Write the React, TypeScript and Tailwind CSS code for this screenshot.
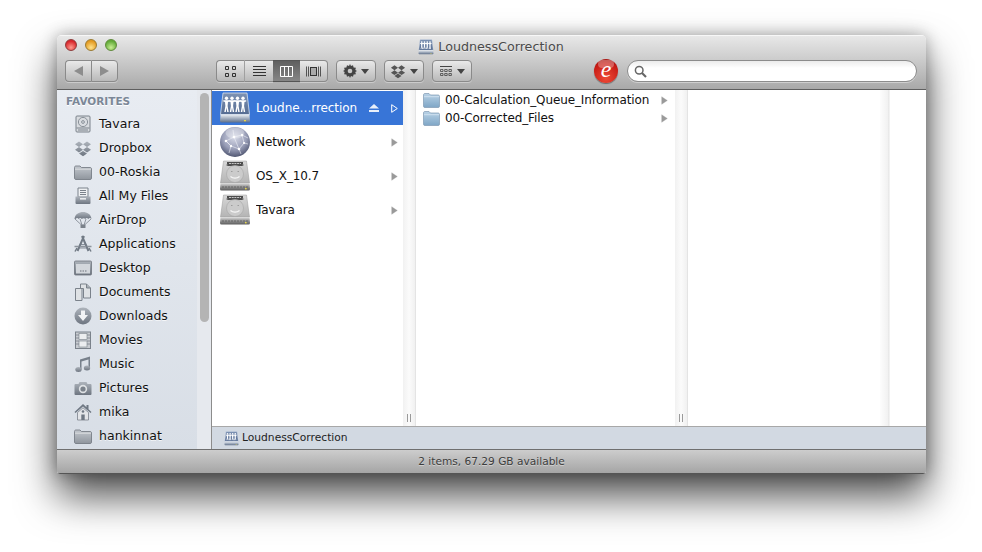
import React from "react";

function Defs() {
  return (
    <svg width="0" height="0" className="absolute">
      <defs>
        <linearGradient id="side" x1="0" y1="0" x2="0" y2="1">
          <stop offset="0" stopColor="#aeb4bc" />
          <stop offset="1" stopColor="#6d7580" />
        </linearGradient>
        <linearGradient id="folderSide" x1="0" y1="0" x2="0" y2="1">
          <stop offset="0" stopColor="#c3c8ce" />
          <stop offset="1" stopColor="#8f959d" />
        </linearGradient>
        <linearGradient id="folderBlue" x1="0" y1="0" x2="0" y2="1">
          <stop offset="0" stopColor="#b9d2e6" />
          <stop offset="1" stopColor="#7fa6c6" />
        </linearGradient>
        <linearGradient id="hd" x1="0" y1="0" x2="0" y2="1">
          <stop offset="0" stopColor="#d8d8d8" />
          <stop offset="1" stopColor="#b4b4b4" />
        </linearGradient>
        <linearGradient id="hdb" x1="0" y1="0" x2="0" y2="1">
          <stop offset="0" stopColor="#e2e2e2" />
          <stop offset="0.45" stopColor="#9a9a9a" />
          <stop offset="1" stopColor="#5c5c5c" />
        </linearGradient>
        <radialGradient id="globe" cx="0.48" cy="0.34" r="0.72">
          <stop offset="0" stopColor="#d6d9e6" />
          <stop offset="0.55" stopColor="#9a9fb8" />
          <stop offset="0.85" stopColor="#5f6580" />
          <stop offset="1" stopColor="#3a3f58" />
        </radialGradient>
        <linearGradient id="srv" x1="0" y1="0" x2="0" y2="1">
          <stop offset="0" stopColor="#7e93b4" />
          <stop offset="1" stopColor="#566c92" />
        </linearGradient>
        <linearGradient id="srvb" x1="0" y1="0" x2="0" y2="1">
          <stop offset="0" stopColor="#eef1f5" />
          <stop offset="0.45" stopColor="#a9b4c4" />
          <stop offset="1" stopColor="#5f6f88" />
        </linearGradient>
      </defs>
    </svg>
  );
}

const S = ({ children }: { children: React.ReactNode }) => (
  <svg width="18" height="18" viewBox="0 0 18 18" className="shrink-0">
    {children}
  </svg>
);

const SideFolder = () => (
  <S>
    <path d="M.5 4.500c0-1 .6-1.500 1.500-1.500h4l1.500 1.500H16c1 0 1.500.6 1.500 1.500v9c0 1-.6 1.500-1.500 1.500H2c-1 0-1.500-.6-1.500-1.500z" fill="url(#folderSide)" stroke="#6f757d" strokeWidth=".8" />
    <path d="M1 6.200h16" stroke="#e4e6e9" strokeWidth=".8" />
  </S>
);
const SideDisk = () => (
  <S>
    <rect x="2" y="1" width="14" height="16" rx="1" fill="#d9dce0" stroke="#7b828b" />
    <circle cx="9" cy="7" r="4.600" fill="none" stroke="#8b929a" />
    <circle cx="9" cy="7" r="1.400" fill="none" stroke="#8b929a" />
    <path d="M2.500 13h13M4 15h10" stroke="#7b828b" />
  </S>
);
const SideDropbox = () => (
  <S>
    <path d="M5 2.500 1 5.300 5 8 9 5.300zM13 2.500 9 5.300 13 8l4-2.700zM5 8 1 10.800l4 2.700 4-2.700zM13 8l-4 2.800 4 2.700 4-2.700zM5 14.500l4 2.700 4-2.700-4-2.600z" fill="url(#side)" />
  </S>
);
const SideFiles = () => (
  <S>
    <path d="M4 1h10v9H4z" fill="#eef0f2" stroke="#7b828b" />
    <path d="M6 3.500h6M6 5.500h6M6 7.500h6" stroke="#7b828b" />
    <path d="M1.500 9.500h15V16a1 1 0 0 1-1 1h-13a1 1 0 0 1-1-1z" fill="url(#side)" />
    <rect x="6" y="11" width="6" height="1.600" fill="#e8eaec" />
  </S>
);
const SideAirDrop = () => (
  <S>
    <path d="M.5 8C1 3 5 1 9 1s8 2 8.500 7c-1-1.200-2.300-1.200-3.200 0-1-1.200-2.300-1.200-3 0-.8-1-2.300-1-3.600 0-.7-1.200-2-1.200-3 0-.9-1.200-2.200-1.200-3.200 0z" fill="url(#side)" />
    <path d="M1 8l6.500 6M17 8l-6.500 6M6 8l2 6M12 8l-2 6" stroke="#7b828b" strokeWidth=".8" fill="none" />
    <rect x="6.500" y="13.500" width="5" height="3.500" rx=".5" fill="#7b828b" />
  </S>
);
const SideApps = () => (
  <S>
    <path d="M10 1 3.500 16M8 1l6.500 15" stroke="#717a85" strokeWidth="2" fill="none" />
    <path d="M0.500 11.500h17" stroke="#8d949d" strokeWidth="1.600" />
    <path d="M6 9.500h6l1 3.500H5z" fill="none" stroke="#717a85" strokeWidth=".8" />
    <path d="M1 16.500 3 13M17 16.500 15 13" stroke="#717a85" strokeWidth="1.500" />
  </S>
);
const SideDesktop = () => (
  <S>
    <rect x=".5" y="2" width="17" height="14" rx="1" fill="url(#side)" stroke="#6f757d" strokeWidth=".8" />
    <rect x="2" y="5" width="14" height="9.500" fill="#d3d7dc" />
    <path d="M6 12h1.500M8.500 12H10M11 12h1.500" stroke="#6f757d" strokeWidth="1.200" />
  </S>
);
const SideDocs = () => (
  <S>
    <path d="M1.500 5.500H8v12H1.500z" fill="#dfe2e5" stroke="#7b828b" />
    <path d="M6.500 1h6l4 4v10h-7V5.500h-3z" fill="#dfe2e5" stroke="#7b828b" />
    <path d="M12.500 1v4h4" fill="#aab0b7" stroke="#7b828b" />
  </S>
);
const SideDownloads = () => (
  <S>
    <circle cx="9" cy="9" r="8.500" fill="url(#side)" />
    <path d="M7 3.500h4V8h3l-5 6-5-6h3z" fill="#f2f3f5" />
  </S>
);
const SideMovies = () => (
  <S>
    <rect x="1.500" y="1" width="15" height="16.500" fill="#c8ccd1" stroke="#7b828b" />
    <rect x="5" y="2.500" width="8" height="6" fill="#eceef0" stroke="#7b828b" strokeWidth=".6" />
    <rect x="5" y="10" width="8" height="6" fill="#eceef0" stroke="#7b828b" strokeWidth=".6" />
    <path d="M1.500 4h3.500M1.500 7h3.500M1.500 10h3.500M1.500 13h3.500M13 4h3.500M13 7h3.500M13 10h3.500M13 13h3.500" stroke="#7b828b" strokeWidth=".8" />
  </S>
);
const SideMusic = () => (
  <S>
    <path d="M6 4.500 16 1.500v2.500L7.500 6.500V14.500h-1.500V4.500zM14.500 3h1.500v10h-1.500z" fill="#77808b" />
    <ellipse cx="4.500" cy="14.500" rx="3.200" ry="2.500" fill="url(#side)" />
    <ellipse cx="13" cy="13" rx="3.200" ry="2.500" fill="url(#side)" />
  </S>
);
const SidePictures = () => (
  <S>
    <path d="M1.500 5h3l1-2h7l1 2h3a1 1 0 0 1 1 1v9a1 1 0 0 1-1 1h-15a1 1 0 0 1-1-1V6a1 1 0 0 1 1-1z" fill="url(#side)" />
    <circle cx="9" cy="10" r="4.200" fill="#dfe2e5" />
    <circle cx="9" cy="10" r="2.600" fill="#7b828b" />
  </S>
);
const SideHome = () => (
  <S>
    <path d="M9 1 .5 9l1 1L9 3.500 16.500 10l1-1-3-2.800V2h-2v2.300z" fill="#6f7883" />
    <path d="M3.500 9.500 9 4.800l5.500 4.700V17h-11z" fill="#e3e5e8" stroke="#7b828b" strokeWidth=".8" />
    <path d="M7.300 17v-5.500h3.400V17z" fill="#6f7883" />
    <circle cx="9" cy="8.500" r="1.300" fill="#6f7883" />
  </S>
);

const favourites: [string, React.FC][] = [
  ["Tavara", SideDisk],
  ["Dropbox", SideDropbox],
  ["00-Roskia", SideFolder],
  ["All My Files", SideFiles],
  ["AirDrop", SideAirDrop],
  ["Applications", SideApps],
  ["Desktop", SideDesktop],
  ["Documents", SideDocs],
  ["Downloads", SideDownloads],
  ["Movies", SideMovies],
  ["Music", SideMusic],
  ["Pictures", SidePictures],
  ["mika", SideHome],
  ["hankinnat", SideFolder],
];

const HardDrive = () => (
  <svg width="32" height="32" viewBox="0 0 32 32" className="shrink-0">
    <path d="M4.500 1h23L30.500 23h-29z" fill="url(#hd)" stroke="#9a9a9a" strokeWidth=".5" />
    <path d="M8 2h16v4H8z" fill="#4d4d4d" />
    <path d="M10 3.500h12" stroke="#e4e4e4" strokeWidth=".8" strokeDasharray="2 .7" />
    <path d="M7 5h2M23 5h2" stroke="#8a8a8a" strokeWidth="1.200" />
    <circle cx="16" cy="14" r="8.500" fill="#cbcbcb" stroke="#a6a6a6" strokeWidth=".6" />
    <path d="M11.500 16.500c2.500 2.200 6.500 2.200 9 0" stroke="#f7f7f7" strokeWidth="1.200" fill="none" />
    <path d="M12 11.500h1.500M18.500 11.500H20" stroke="#9d9d9d" strokeWidth="1" />
    <path d="M1.500 23h29l.5 6a1.500 1.500 0 0 1-1.500 1.500h-27A1.500 1.500 0 0 1 1 29z" fill="url(#hdb)" />
    <path d="M3 27h26" stroke="#555" strokeWidth=".7" strokeDasharray="2 1" />
    <rect x="26" y="28" width="1.600" height="1.400" fill="#e8d84a" />
  </svg>
);

const Globe = () => (
  <svg width="32" height="32" viewBox="0 0 32 32" className="shrink-0">
    <circle cx="16" cy="16" r="15" fill="url(#globe)" />
    <path d="M7 15 15 11l8-2 2 8-5 6-8-3zM7 15l5 5M15 11l5 12M23 9l6 3M15 11 14 4M25 17l4 1M12 20l-2 7M20 23l2 5" stroke="#eef0f6" strokeWidth=".6" fill="none" />
    <g fill="#fff">
      <circle cx="7" cy="15" r="1.300" />
      <circle cx="15" cy="11" r="1.300" />
      <circle cx="23" cy="9" r="1.200" />
      <circle cx="25" cy="17" r="1.100" />
      <circle cx="20" cy="23" r="1.300" />
      <circle cx="12" cy="20" r="1.200" />
    </g>
    <ellipse cx="16" cy="7" rx="9.500" ry="5.500" fill="#fff" opacity=".3" />
  </svg>
);

const Person = ({ x }: { x: number }) => (
  <g transform={`translate(${x} 0)`} fill="#fff">
    <circle cx="0" cy="6.200" r="1.700" />
    <path d="M-3.200 8.200h6.400v1.400l-1.700.3-.4 4 1.100 6H.7L0 15.500-.7 19.900h-1.500l1.100-6-.4-4-1.700-.3z" />
  </g>
);

const Server = ({ size = 32 }: { size?: number }) => (
  <svg width={size} height={size} viewBox="0 0 32 32" className="shrink-0">
    <path d="M4 1h24l2.500 21.500h-29z" fill="url(#srv)" stroke="#dbe3ee" strokeWidth=".8" />
    <Person x={7.500} />
    <Person x={13} />
    <Person x={18.500} />
    <Person x={24} />
    <path d="M1.500 22.500h29l.5 6.500a1.500 1.500 0 0 1-1.500 1.500h-27A1.500 1.500 0 0 1 1 29z" fill="url(#srvb)" />
    <rect x="25" y="28" width="2" height="1.300" fill="#e8d84a" />
  </svg>
);

const BlueFolder = () => (
  <svg width="17" height="15" viewBox="0 0 17 15" className="shrink-0">
    <path d="M.5 2C.5 1 1 .5 2 .5h4L7.500 2H15c1 0 1.500.5 1.500 1.500V13c0 1-.5 1.500-1.500 1.500H2C1 14.500.5 14 .5 13z" fill="url(#folderBlue)" stroke="#7f9ab3" strokeWidth=".7" />
    <path d="M1 3.700h15" stroke="#d8e6f2" strokeWidth=".8" />
  </svg>
);

const Tri = ({ color = "#9a9a9a", hollow = false }: { color?: string; hollow?: boolean }) => (
  <svg width="7" height="9" viewBox="0 0 7 9" className="shrink-0">
    <path d="M.7.7 6.300 4.500.7 8.300z" fill={hollow ? "none" : color} stroke={color} strokeWidth={hollow ? 1 : 0.3} />
  </svg>
);

const Caret = () => (
  <svg width="8" height="5" viewBox="0 0 8 5" className="shrink-0">
    <path d="M0 0h8L4 5z" fill="#444" />
  </svg>
);

const Resizer = () => (
  <div className="relative w-[13px] shrink-0 bg-[linear-gradient(90deg,#f1f1f1,#fbfbfb_50%,#f1f1f1)] border-r border-[#e4e4e4]">
    <div className="absolute bottom-[4px] left-[4px] w-[4px] h-[8px] border-x border-[#9a9a9a]" />
  </div>
);

const btn = "h-[22px] flex items-center justify-center border border-[#8a8a8a] bg-[linear-gradient(#e9e9e9,#b9b9b9)] shadow-[0_1px_0_rgba(255,255,255,.35)]";

const Column1Row = ({
  icon,
  label,
  selected = false,
}: {
  icon: React.ReactNode;
  label: string;
  selected?: boolean;
}) => (
  <div className={`h-[34px] flex items-center pl-[7px] pr-[5px] ${selected ? "bg-[#3875d7] text-white" : "text-[#111]"}`}>
    {icon}
    <span className="ml-[5px] flex-1 truncate">{label}</span>
    {selected && (
      <svg width="10" height="8" viewBox="0 0 10 8" className="mr-[12px] shrink-0">
        <path d="M5 0l5 4.500H0zM0 6h10v2H0z" fill="#e8effa" />
      </svg>
    )}
    <Tri color={selected ? "#fff" : "#9a9a9a"} hollow={selected} />
  </div>
);

const Column2Row = ({ label }: { label: string }) => (
  <div className="h-[18px] flex items-center pl-[7px] pr-[7px] text-[#111]">
    <BlueFolder />
    <span className="ml-[5px] flex-1 truncate">{label}</span>
    <Tri />
  </div>
);

export default function App() {
  return (
    <div className="h-[552px] w-[982px] overflow-hidden bg-white pt-[35px] pl-[57px] font-['DejaVu_Sans',sans-serif] text-[12px] tracking-[-0.1px]">
      <Defs />
      <div className="w-[869px] h-[439px] flex flex-col rounded-t-[5px] rounded-b-[3px] overflow-hidden shadow-[0_22px_40px_rgba(0,0,0,.7),0_0_16px_rgba(0,0,0,.3)]">
        {/* Toolbar */}
        <div className="h-[55px] shrink-0 flex flex-col bg-[linear-gradient(#e9e9e9,#a9a9a9)] border-b border-[#5f5f5f] shadow-[inset_0_1px_0_#f7f7f7]">
          <div className="h-[24px] shrink-0 relative flex items-center justify-center pb-[1px] pr-[1px] tracking-normal text-[#4a4a4a] text-[12.7px] [text-shadow:0_1px_0_rgba(255,255,255,.5)]">
            <div className="absolute left-[8px] top-[4px] flex gap-[8px]">
              <div className="w-[12px] h-[12px] rounded-full border border-[#8f3a3a] bg-[radial-gradient(circle_at_50%_75%,#ff9a8e,#d8262b_70%)]" />
              <div className="w-[12px] h-[12px] rounded-full border border-[#9a7a30] bg-[radial-gradient(circle_at_50%_75%,#ffe28a,#e39a22_70%)]" />
              <div className="w-[12px] h-[12px] rounded-full border border-[#5f8a3a] bg-[radial-gradient(circle_at_50%_75%,#c9ee94,#63ab3a_70%)]" />
            </div>
            <span className="mr-[4px]">
              <Server size={16} />
            </span>
            LoudnessCorrection
          </div>
          <div className="flex items-center pl-[8px] pr-[9px]">
            <div className="flex w-[53px]">
              <div className={`${btn} flex-1 rounded-l-[4px] border-r-0`}>
                <svg width="9" height="10" viewBox="0 0 9 10">
                  <path d="M9 0v10L0 5z" fill="#8d8d8d" />
                </svg>
              </div>
              <div className={`${btn} flex-1 rounded-r-[4px]`}>
                <svg width="9" height="10" viewBox="0 0 9 10">
                  <path d="M0 0v10l9-5z" fill="#8d8d8d" />
                </svg>
              </div>
            </div>
            <div className="flex w-[112px] ml-[98px]">
              <div className={`${btn} w-[29px] rounded-l-[4px] border-r-[#a0a0a0]`}>
                <svg width="11" height="11" viewBox="0 0 11 11" fill="none" stroke="#333">
                  <path d="M.5.500h3v3h-3zM7.500.5h3v3h-3zM.5 7.500h3v3h-3zM7.500 7.500h3v3h-3z" />
                </svg>
              </div>
              <div className={`${btn} w-[28px] border-l-0 border-r-0`}>
                <svg width="13" height="11" viewBox="0 0 13 11" stroke="#333">
                  <path d="M0 .5h13M0 3.500h13M0 6.500h13M0 9.500h13" />
                </svg>
              </div>
              <div className="h-[22px] w-[27px] flex items-center justify-center border-y border-[#555] bg-[linear-gradient(#5f5f5f,#868686)]">
                <svg width="13" height="11" viewBox="0 0 13 11" fill="none" stroke="#fff">
                  <path d="M.5.500h12v10H.5zM4.500.5v10M8.500.5v10" />
                </svg>
              </div>
              <div className={`${btn} flex-1 rounded-r-[4px] border-l-0`}>
                <svg width="15" height="11" viewBox="0 0 15 11" fill="none" stroke="#333">
                  <path d="M.5.500v10M2.500.5v10M12.500.5v10M14.500.5v10" strokeWidth=".8" />
                  <rect x="4.500" y="1.500" width="6" height="8" fill="#aaa" />
                </svg>
              </div>
            </div>
            <div className={`${btn} w-[40px] ml-[8px] rounded-[4px] gap-[4px]`}>
              <svg width="14" height="14" viewBox="0 0 14 14">
                <path d="M7 0l1 2 2-.8.600 2.200 2.300.3-.6 2.200L14 7l-1.700 1.100.6 2.200-2.300.3-.6 2.200-2-.8-1 2-1-2-2 .8-.6-2.200-2.300-.3.6-2.200L0 7l1.700-1.100-.6-2.200 2.300-.3.600-2.200 2 .8z" fill="#444" />
                <circle cx="7" cy="7" r="2.300" fill="#c9c9c9" />
              </svg>
              <Caret />
            </div>
            <div className={`${btn} w-[40px] ml-[8px] rounded-[4px] gap-[4px]`}>
              <svg width="16" height="15" viewBox="0 0 18 17">
                <path d="M5 1.500 1 4.300 5 7l4-2.700zM13 1.500 9 4.300 13 7l4-2.700zM5 7 1 9.800l4 2.700 4-2.700zM13 7l-4 2.800 4 2.700 4-2.700zM5 13.500l4 2.700 4-2.700-4-2.600z" fill="#555" />
              </svg>
              <Caret />
            </div>
            <div className={`${btn} w-[40px] ml-[8px] rounded-[4px] gap-[5px]`}>
              <svg width="12" height="10" viewBox="0 0 12 10" fill="none" stroke="#444">
                <path d="M0 .5h12" strokeWidth="1" />
                <path d="M.5 3.500h2.500v2H.5zM4.700 3.500h2.500v2H4.700zM8.900 3.500h2.500v2H8.900zM.5 7.500h2.500v2H.5zM4.700 7.500h2.500v2H4.700zM8.900 7.500h2.500v2H8.900z" strokeWidth=".8" />
              </svg>
              <Caret />
            </div>
            <div className="relative ml-[122px] w-[24px] h-[24px] rounded-full bg-[radial-gradient(circle_at_50%_80%,#ee4a36,#c81d16_65%,#8e1010)] flex items-center justify-center shadow-[0_1px_1px_rgba(0,0,0,.4)]">
              <div className="absolute left-[4px] right-[4px] top-[1px] h-[8px] rounded-full bg-white/30" />
              <span className="relative font-['Liberation_Serif',serif] italic text-white text-[24px] leading-[24px] -mt-[5px]">e</span>
            </div>
            <div className="ml-[9px] flex-1 h-[22px] rounded-full border border-[#8c8c8c] bg-[linear-gradient(#ececec,#ffffff_35%)] flex items-center pl-[6px] shadow-[0_1px_0_rgba(255,255,255,.4)]">
              <svg width="13" height="13" viewBox="0 0 13 13" fill="none" stroke="#666">
                <circle cx="5.200" cy="5.200" r="3.800" strokeWidth="1.500" />
                <path d="M8 8l4 4" strokeWidth="2.200" />
              </svg>
            </div>
          </div>
        </div>

        {/* Middle */}
        <div className="flex-1 flex min-h-0">
          {/* Sidebar */}
          <div className="relative w-[155px] shrink-0 overflow-hidden border-r border-[#8c8c8c] bg-[#e6e9ee]">
            <div className="w-[140px] h-full bg-[linear-gradient(#e8ecf2,#d8dee6)] pt-[5px]">
              <div className="h-[14px] pl-[9px] flex items-center font-bold text-[10.5px] tracking-normal text-[#7b8797] [text-shadow:0_1px_0_#fff]">
                FAVORITES
              </div>
              <div className="mt-[3px] pl-[17px] text-[12.5px] tracking-[0.03px]">
                {favourites.map(([label, Icon]) => (
                  <div key={label} className="h-[24px] flex items-center text-[#111] [text-shadow:0_1px_0_rgba(255,255,255,.7)]">
                    <span className="w-[18px] flex justify-center">
                      <Icon />
                    </span>
                    <span className="ml-[7px]">{label}</span>
                  </div>
                ))}
              </div>
            </div>
            <div className="absolute left-[143px] top-[3px] w-[9px] h-[229px] rounded-full bg-[#b4b4b4]" />
          </div>

          {/* Columns */}
          <div className="flex-1 flex flex-col min-w-0">
            <div className="flex-1 flex min-h-0 bg-white">
              <div className="w-[191px] shrink-0 pt-[1px]">
                <Column1Row icon={<Server />} label="Loudne…rrection" selected />
                <Column1Row icon={<Globe />} label="Network" />
                <Column1Row icon={<HardDrive />} label="OS_X_10.7" />
                <Column1Row icon={<HardDrive />} label="Tavara" />
              </div>
              <Resizer />
              <div className="w-[259px] shrink-0 pt-[1px]">
                <Column2Row label="00-Calculation_Queue_Information" />
                <Column2Row label="00-Corrected_Files" />
              </div>
              <Resizer />
              <div className="w-[192px] shrink-0" />
              <div className="w-[10px] shrink-0 bg-[linear-gradient(90deg,#fdfdfd,#f2f2f2_75%,#e4e4e4_78%,#f6f6f6)]" />
            </div>
            <div className="h-[23px] shrink-0 flex items-center pl-[12px] bg-[#d2d9e2] border-t border-[#a8a8a8] text-[10.7px] tracking-normal text-[#222]">
              <Server size={15} />
              <span className="ml-[3px]">LoudnessCorrection</span>
            </div>
          </div>
        </div>

        {/* Status */}
        <div className="h-[25px] shrink-0 flex items-center justify-center border-t border-b border-t-[#6f6f6f] border-b-[#555] bg-[linear-gradient(#cdcdcd,#a5a5a5)] text-[10.6px] tracking-normal text-[#3d3d3d] [text-shadow:0_1px_0_rgba(255,255,255,.4)]">
          2 items, 67.29 GB available
        </div>
      </div>
    </div>
  );
}
